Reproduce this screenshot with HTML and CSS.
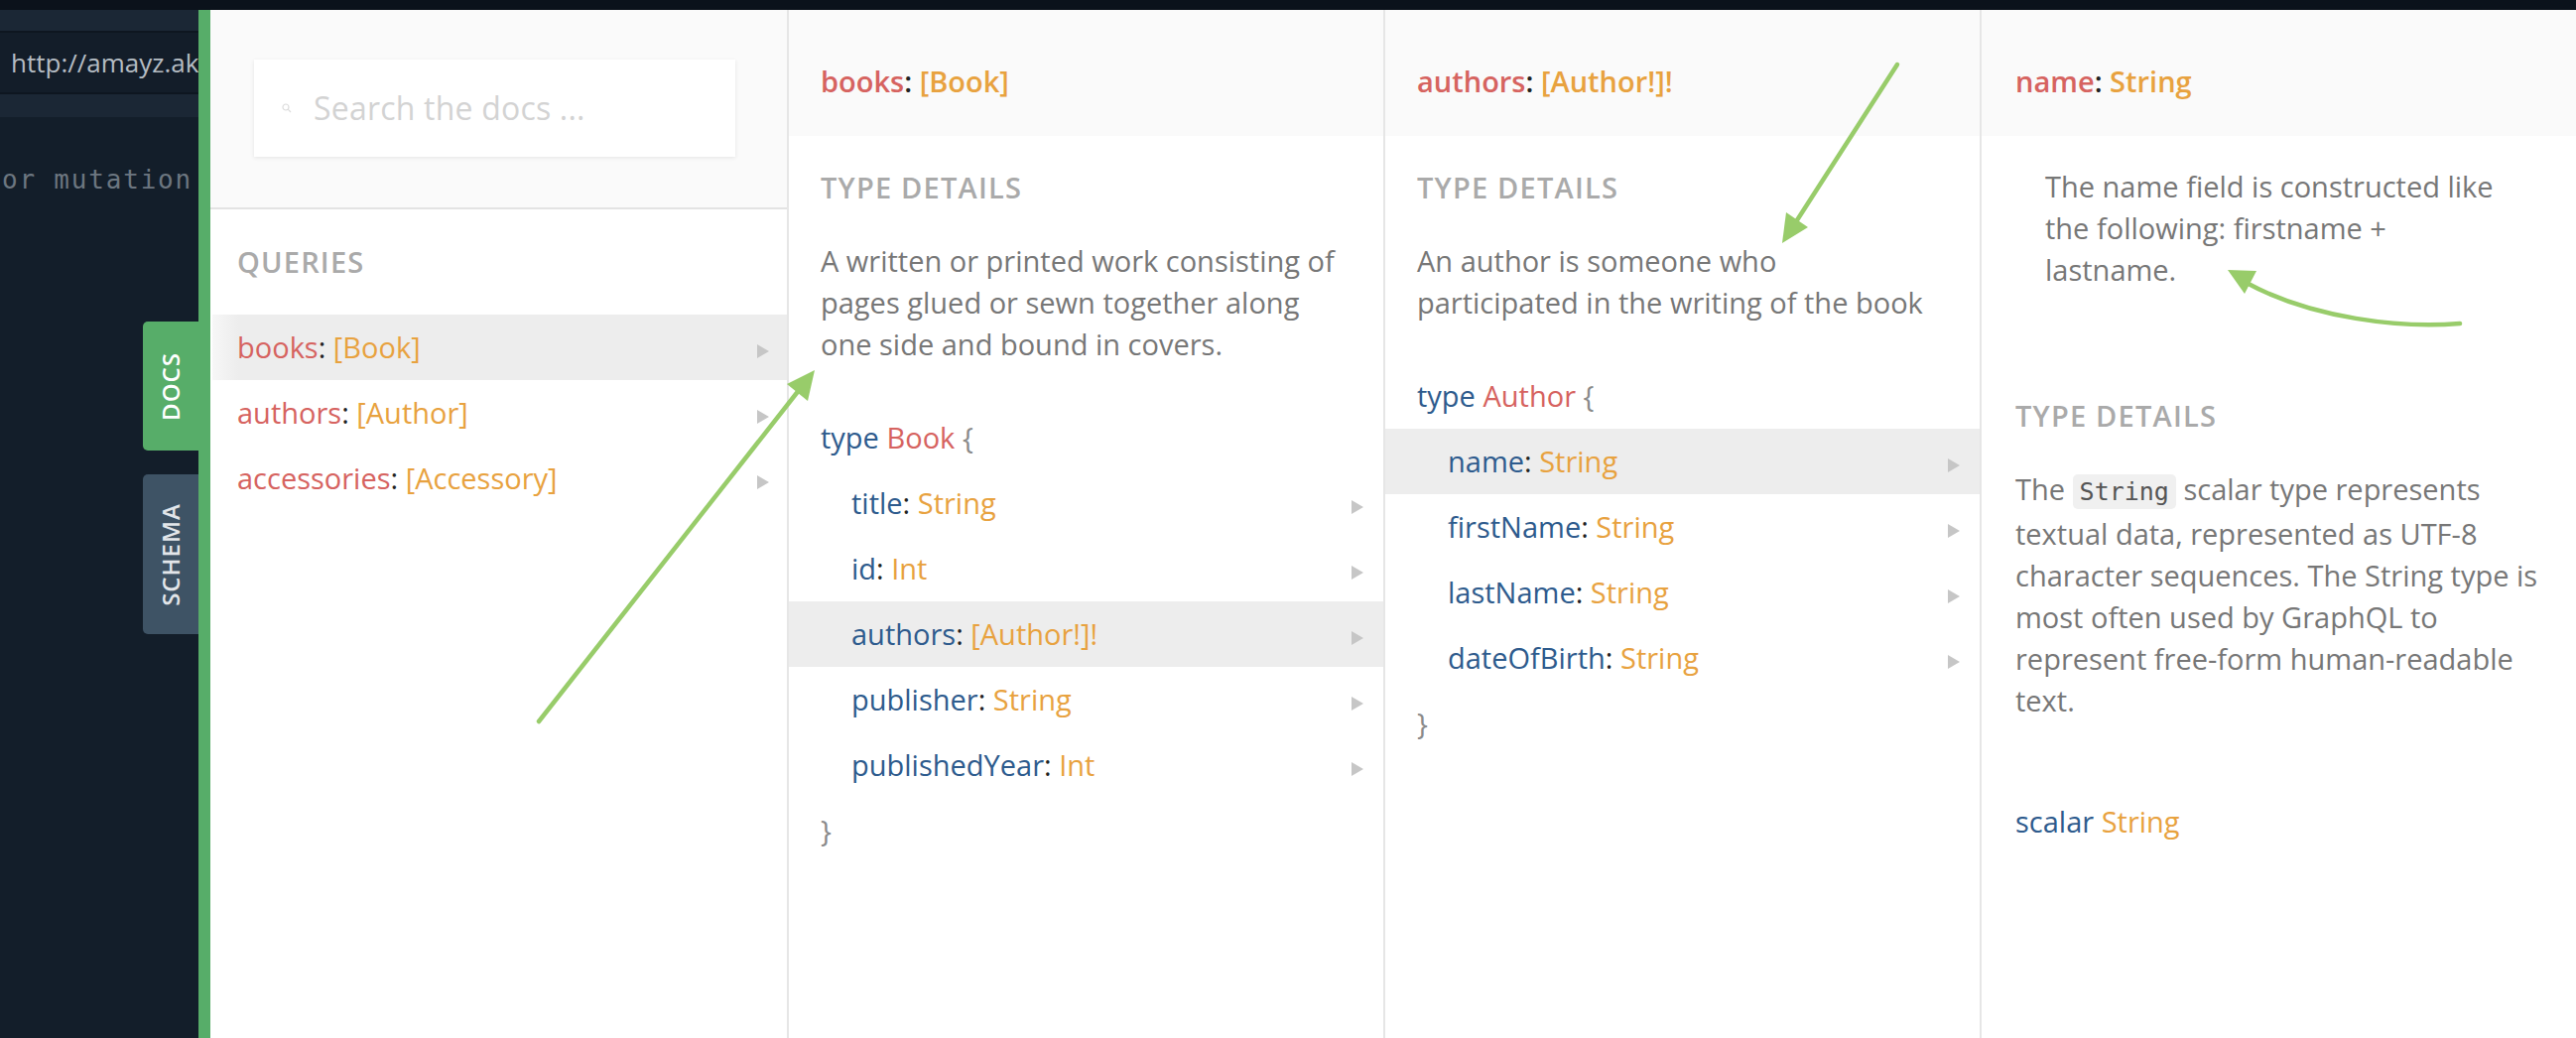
FILE: index.html
```html
<!DOCTYPE html>
<html>
<head>
<meta charset="utf-8">
<title>GraphQL Docs</title>
<link rel="stylesheet" href="styles.css">
</head>
<body>
<div class="topbar"></div>
<div class="main">
  <div class="editor">
    <div class="tabs"></div>
    <div class="url">http://amayz.ak</div>
    <div class="strip"></div>
    <div class="code">
      <div class="code-line"><span>or mutation</span></div>
    </div>
  </div>
  <div class="docs">
    <div class="side-tabs">
      <div class="side-tab docs-tab"><span>DOCS</span></div>
      <div class="side-tab schema-tab"><span>SCHEMA</span></div>
    </div>
    <div class="col col-root">
      <div class="search-area">
        <div class="search-box">
          <svg class="search-icon" width="10" height="10" viewBox="0 0 10 10"><circle cx="4" cy="4" r="3" fill="none" stroke="#dcdcdc" stroke-width="1.2"/><line x1="6.2" y1="6.2" x2="9" y2="9" stroke="#dcdcdc" stroke-width="1.2"/></svg>
          <span class="placeholder">Search the docs ...</span>
        </div>
      </div>
      <div class="cat cat-root">Queries</div>
      <div class="root-list">
        <div class="row root-row active"><span><span class="r">books</span>: <span class="o">[Book]</span></span><i class="tri"></i></div>
        <div class="row root-row"><span><span class="r">authors</span>: <span class="o">[Author]</span></span><i class="tri"></i></div>
        <div class="row root-row"><span><span class="r">accessories</span>: <span class="o">[Accessory]</span></span><i class="tri"></i></div>
      </div>
    </div>

    <div class="col col-doc">
      <div class="col-header"><span class="r">books</span>: <span class="o">[Book]</span></div>
      <div class="cat">Type Details</div>
      <p class="desc">A written or printed work consisting of<br>pages glued or sewn together along<br>one side and bound in covers.</p>
      <div class="type-block">
        <div class="type-line"><span class="b">type</span> <span class="r">Book</span> <span class="g">{</span></div>
        <div class="row field"><span><span class="b">title</span>: <span class="o">String</span></span><i class="tri"></i></div>
        <div class="row field"><span><span class="b">id</span>: <span class="o">Int</span></span><i class="tri"></i></div>
        <div class="row field active"><span><span class="b">authors</span>: <span class="o">[Author!]!</span></span><i class="tri"></i></div>
        <div class="row field"><span><span class="b">publisher</span>: <span class="o">String</span></span><i class="tri"></i></div>
        <div class="row field"><span><span class="b">publishedYear</span>: <span class="o">Int</span></span><i class="tri"></i></div>
        <div class="type-line"><span class="g">}</span></div>
      </div>
    </div>

    <div class="col col-doc">
      <div class="col-header"><span class="r">authors</span>: <span class="o">[Author!]!</span></div>
      <div class="cat">Type Details</div>
      <p class="desc">An author is someone who<br>participated in the writing of the book</p>
      <div class="type-block">
        <div class="type-line"><span class="b">type</span> <span class="r">Author</span> <span class="g">{</span></div>
        <div class="row field active"><span><span class="b">name</span>: <span class="o">String</span></span><i class="tri"></i></div>
        <div class="row field"><span><span class="b">firstName</span>: <span class="o">String</span></span><i class="tri"></i></div>
        <div class="row field"><span><span class="b">lastName</span>: <span class="o">String</span></span><i class="tri"></i></div>
        <div class="row field"><span><span class="b">dateOfBirth</span>: <span class="o">String</span></span><i class="tri"></i></div>
        <div class="type-line"><span class="g">}</span></div>
      </div>
    </div>

    <div class="col col-doc col-last">
      <div class="col-header"><span class="r">name</span>: <span class="o">String</span></div>
      <p class="desc desc-field">The name field is constructed like<br>the following: firstname +<br>lastname.</p>
      <div class="cat cat-scalar">Type Details</div>
      <p class="desc">The <code>String</code> scalar type represents<br>textual data, represented as UTF-8<br>character sequences. The String type is<br>most often used by GraphQL to<br>represent free-form human-readable<br>text.</p>
      <div class="scalar-line"><span class="b">scalar</span> <span class="o">String</span></div>
    </div>
  </div>
</div>

<svg class="annotations" width="2596" height="1046" viewBox="0 0 2596 1046">
  <g stroke="#98cc6a" stroke-width="4.5" stroke-linecap="round" fill="none">
    <line x1="543" y1="727" x2="806" y2="392"/>
    <line x1="1912" y1="65" x2="1809" y2="225"/>
    <path d="M2479 326 C2420 331 2330 321 2264 285"/>
  </g>
  <g fill="#98cc6a">
    <polygon points="821,373 793,387 814,404"/>
    <polygon points="1796,245 1800,214 1822,229"/>
    <polygon points="2245,272 2274,273 2262,296"/>
  </g>
</svg>
</body>
</html>
```
FILE: styles.css
```css
* { box-sizing: border-box; }
html, body { margin: 0; padding: 0; }
body {
  width: 2596px;
  height: 1046px;
  overflow: hidden;
  position: relative;
  background: #ffffff;
  font-family: "Open Sans", "DejaVu Sans", sans-serif;
  font-size: 29px;
  line-height: 42px;
  color: #777777;
}
.topbar { height: 10px; background: #0b121b; }
.main { display: flex; height: 1036px; }

/* editor (left dark area) */
.editor {
  width: 200px;
  flex-shrink: 0;
  background: #131e2a;
  display: flex;
  flex-direction: column;
  overflow: hidden;
}
.tabs { height: 23px; background: #1b2735; border-bottom: 2px solid #0e1620; }
.url {
  height: 62px;
  background: #131d29;
  border-bottom: 2px solid #0e1620;
  padding-left: 11px;
  font-size: 26px;
  line-height: 60px;
  color: #b5bcc3;
  white-space: nowrap;
  overflow: hidden;
}
.strip { height: 23px; background: #1b2735; }
.code { flex: 1; padding-top: 42px; }
.code-line {
  display: flex;
  justify-content: flex-end;
  padding-right: 6px;
  font-family: "DejaVu Sans Mono", "Liberation Mono", monospace;
  font-size: 26px;
  letter-spacing: 1.8px;
  line-height: 42px;
  color: #6c7680;
  white-space: nowrap;
}
.code-line span { flex-shrink: 0; }

/* docs panel */
.docs {
  flex: 1;
  display: flex;
  position: relative;
  border-left: 12px solid #57ad69;
  min-width: 0;
}
.side-tabs {
  position: absolute;
  left: -68px;
  top: 314px;
  display: flex;
  flex-direction: column;
  gap: 24px;
}
.side-tab {
  width: 56px;
  border-radius: 5px 0 0 5px;
  display: flex;
  align-items: center;
  justify-content: center;
  font-size: 24px;
  font-weight: 600;
  letter-spacing: 1px;
  line-height: 1;
}
.side-tab span { writing-mode: vertical-rl; transform: rotate(180deg); }
.docs-tab { height: 130px; background: #57ad69; color: #ffffff; }
.schema-tab { height: 161px; background: #3e5365; color: #e2e6ea; }

.col { flex-shrink: 0; overflow: hidden; }
.col-root { width: 581px; }
.col-doc { width: 601px; border-left: 2px solid #e6e6e6; padding: 0 30px 0 32px; }
.col-last { padding: 0 24px 0 34px; }

.search-area {
  height: 201px;
  background: #fafafa;
  border-bottom: 2px solid #e3e3e3;
  padding: 50px 0 0 44px;
}
.search-box {
  width: 485px;
  height: 98px;
  background: #ffffff;
  box-shadow: 0 1px 4px rgba(0, 0, 0, 0.09);
  display: flex;
  align-items: center;
  padding-left: 28px;
}
.search-icon { flex-shrink: 0; margin-right: 22px; }
.placeholder { font-size: 32px; line-height: 44px; color: #d3d3d3; letter-spacing: 0.2px; }

.cat {
  font-weight: 600;
  color: #aaaaaa;
  letter-spacing: 1.2px;
  text-transform: uppercase;
  margin-top: 31px;
  white-space: nowrap;
}
.cat-root { margin: 32px 0 32px 27px; }
.cat-scalar { margin-top: 105px; }

.row {
  height: 66px;
  display: flex;
  align-items: center;
  justify-content: space-between;
  white-space: nowrap;
}
.row.active { background: #ededed; }
.root-list { margin-left: 2px; }
.root-row { padding: 0 18px 0 25px; }
.root-row.active { background: linear-gradient(to right, #f7f7f7 0, #ededed 26px); }
.field { margin: 0 -30px 0 -32px; padding: 0 20px 0 63px; }
.tri {
  width: 0;
  height: 0;
  border-left: 12px solid #c6c6c6;
  border-top: 7px solid transparent;
  border-bottom: 7px solid transparent;
  margin-top: 8px;
}

.col-header {
  height: 127px;
  margin: 0 -30px 0 -32px;
  padding: 51px 30px 0 32px;
  background: #fafafa;
  font-weight: 600;
  color: #222222;
  white-space: nowrap;
}
.col-last .col-header { margin: 0 -24px 0 -34px; padding-left: 34px; }

.desc { margin: 32px 0 0; color: #777777; }
.desc-field { margin-top: 30px; padding: 0 0 0 30px; }
.desc code {
  font-family: "DejaVu Sans Mono", "Liberation Mono", monospace;
  font-size: 25px;
  color: #555555;
  background: #f0f0f0;
  border-radius: 5px;
  padding: 3px 7px;
}

.type-block { margin-top: 40px; }
.type-line { height: 66px; line-height: 66px; white-space: nowrap; }
.scalar-line { margin-top: 68px; line-height: 66px; }

.r { color: #d66360; }
.o { color: #e8a23f; }
.b { color: #2e5b8d; }
.g { color: #8a8a8a; }
.row > span { color: #222222; }

.annotations {
  position: absolute;
  left: 0;
  top: 0;
  pointer-events: none;
}
```
